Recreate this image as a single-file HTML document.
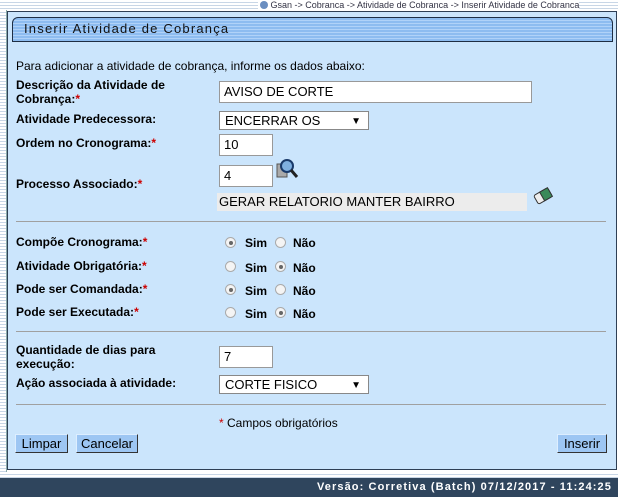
<!DOCTYPE html>
<html><head><meta charset="utf-8"><style>
body{margin:0;width:618px;height:500px;background:#fff;position:relative;overflow:hidden;font-family:"Liberation Sans",Arial,sans-serif;font-size:12px;color:#000}
.a{position:absolute;white-space:nowrap}
.lb{font-weight:bold}
.r{color:#c00}
.in{position:absolute;background:#fff;border:1px solid #999;box-sizing:border-box;font-size:13px;padding:2px 4px;line-height:16px}
.sel{position:absolute;background:#fff;border:1px solid #888;box-sizing:border-box;font-size:13px;padding:0 5px;line-height:17px}
.sel:after{content:"▼";position:absolute;right:7px;top:1px;font-size:10px}
.hr{position:absolute;left:16px;width:590px;height:1px;background:#a0a0a0}
.rad{position:absolute;width:11px;height:11px;border-radius:50%;border:1px solid #aaa;background:#f4f4f4;box-sizing:border-box}
.rad.on:after{content:"";position:absolute;left:2.5px;top:2.5px;width:4px;height:4px;border-radius:50%;background:#666}
.btn{position:absolute;top:434px;height:19px;background:#9dc6f3;border:1px solid #333;border-left-color:#ddeeff;border-top-color:#ddeeff;box-sizing:border-box;font-size:13px;line-height:17px;text-align:center}
</style></head><body>
<div class="a" style="left:0;top:0;width:618px;height:10px;background:repeating-linear-gradient(#fff 0 2px,#c8d6e6 2px 3px)"></div>
<div class="a" style="left:0;top:10px;width:6px;height:462px;background:repeating-linear-gradient(#fff 0 2px,#c8d6e6 2px 3px);border-right:1px solid #8aa"></div>
<div class="a" style="left:258px;top:0;font-size:9px;color:#334;background:#fff;padding-left:2px"><span style="display:inline-block;width:8px;height:8px;border-radius:50%;background:#6a8ec0;vertical-align:-1px"></span> Gsan -&gt; Cobranca -&gt; Atividade de Cobranca -&gt; Inserir Atividade de Cobranca</div>
<div class="a" style="left:7px;top:11px;width:610px;height:459px;background:#cbe5fc;border:1px solid #2e3f55;box-sizing:border-box"></div>
<div class="a" style="left:12px;top:17px;width:601px;height:25px;box-sizing:border-box;border:1px solid #1e2e44;border-radius:6px 6px 0 0;background:repeating-linear-gradient(#8dbcf0 0 2px,#b0d2f8 2px 3px)"></div>
<div class="a" style="left:24px;top:21px;font-size:13px;letter-spacing:1.2px;color:#111">Inserir Atividade de Cobrança</div>

<div class="a" style="left:16px;top:59px">Para adicionar a atividade de cobrança, informe os dados abaixo:</div>
<div class="a lb" style="left:16px;top:78px;line-height:14px">Descrição da Atividade de<br>Cobrança:<span class="r">*</span></div>
<div class="in" style="left:219px;top:81px;width:313px;height:22px">AVISO DE CORTE</div>
<div class="a lb" style="left:16px;top:112px">Atividade Predecessora:</div>
<div class="sel" style="left:219px;top:111px;width:150px;height:19px">ENCERRAR OS</div>
<div class="a lb" style="left:16px;top:136px">Ordem no Cronograma:<span class="r">*</span></div>
<div class="in" style="left:219px;top:134px;width:54px;height:22px">10</div>
<div class="a lb" style="left:16px;top:177px">Processo Associado:<span class="r">*</span></div>
<div class="in" style="left:219px;top:165px;width:54px;height:22px">4</div>
<svg class="a" style="left:276px;top:158px" width="24" height="24" viewBox="0 0 24 24"><rect x="1" y="6" width="10" height="13" fill="#aaa" stroke="#555"/><circle cx="11" cy="8" r="6" fill="#7fb0e0" stroke="#1a3a6a" stroke-width="2"/><line x1="15" y1="12" x2="21" y2="19" stroke="#222" stroke-width="3"/></svg>
<div class="a" style="left:217px;top:193px;width:310px;height:18px;background:#ececec;font-size:13px;line-height:18px;padding-left:2px;box-sizing:border-box">GERAR RELATORIO MANTER BAIRRO</div>
<svg class="a" style="left:532px;top:185px" width="22" height="22" viewBox="0 0 22 22"><g transform="rotate(-30 11 11)"><rect x="3" y="6" width="16" height="10" rx="2" fill="#eee" stroke="#333"/><rect x="10" y="6" width="9" height="10" fill="#3a8a5a" stroke="#333"/></g></svg>
<div class="hr" style="top:221px"></div>

<div class="a lb" style="left:16px;top:235px">Compõe Cronograma:<span class="r">*</span></div>
<div class="a lb" style="left:16px;top:259px">Atividade Obrigatória:<span class="r">*</span></div>
<div class="a lb" style="left:16px;top:282px">Pode ser Comandada:<span class="r">*</span></div>
<div class="a lb" style="left:16px;top:305px">Pode ser Executada:<span class="r">*</span></div>

<div class="rad on" style="left:225px;top:237px"></div><div class="a lb" style="left:245px;top:236px">Sim</div><div class="rad" style="left:275px;top:237px"></div><div class="a lb" style="left:293px;top:236px">Não</div>
<div class="rad" style="left:225px;top:261px"></div><div class="a lb" style="left:245px;top:261px">Sim</div><div class="rad on" style="left:275px;top:261px"></div><div class="a lb" style="left:293px;top:261px">Não</div>
<div class="rad on" style="left:225px;top:284px"></div><div class="a lb" style="left:245px;top:284px">Sim</div><div class="rad" style="left:275px;top:284px"></div><div class="a lb" style="left:293px;top:284px">Não</div>
<div class="rad" style="left:225px;top:307px"></div><div class="a lb" style="left:245px;top:307px">Sim</div><div class="rad on" style="left:275px;top:307px"></div><div class="a lb" style="left:293px;top:307px">Não</div>
<div class="hr" style="top:331px"></div>

<div class="a lb" style="left:16px;top:343px;line-height:14px">Quantidade de dias para<br>execução:</div>
<div class="in" style="left:219px;top:346px;width:54px;height:22px">7</div>
<div class="a lb" style="left:16px;top:376px">Ação associada à atividade:</div>
<div class="sel" style="left:219px;top:375px;width:150px;height:19px">CORTE FISICO</div>
<div class="hr" style="top:404px"></div>
<div class="a" style="left:219px;top:416px"><span class="r">*</span> Campos obrigatórios</div>
<div class="btn" style="left:15px;width:53px">Limpar</div>
<div class="btn" style="left:76px;width:62px">Cancelar</div>
<div class="btn" style="left:557px;width:50px">Inserir</div>

<div class="a" style="left:0;top:472px;width:618px;height:6px;background:repeating-linear-gradient(#fff 0 2px,#c8d6e6 2px 3px)"></div>
<div class="a" style="left:0;top:478px;width:618px;height:19px;background:#2f455d"></div>
<div class="a" style="right:6px;top:481px;color:#fff;font-weight:bold;font-size:11px;letter-spacing:1.1px">Versão: Corretiva (Batch) 07/12/2017 - 11:24:25</div>
</body></html>
